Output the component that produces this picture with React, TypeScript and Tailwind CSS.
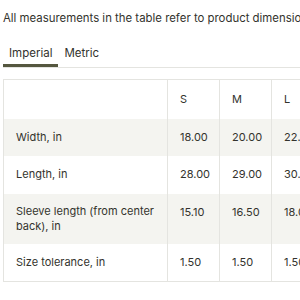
import { useState } from "react";

type Row = { label: string; values: string[]; shaded?: boolean };

const sizes = ["S", "M", "L"];

const rows: Row[] = [
  { label: "Width, in", values: ["18.00", "20.00", "22.00"], shaded: true },
  { label: "Length, in", values: ["28.00", "29.00", "30.00"] },
  { label: "Sleeve length (from center back), in", values: ["15.10", "16.50", "18.00"], shaded: true },
  { label: "Size tolerance, in", values: ["1.50", "1.50", "1.50"] },
];

const App = () => {
  const [tab, setTab] = useState("Imperial");

  return (
    <div className="w-[300px] h-[300px] overflow-hidden bg-white text-[#33332d] font-['Inter',sans-serif]">
      <div className="w-[340px] pl-[3px]">
        <p className="pt-[10px] text-[11.4px] leading-[16px] whitespace-nowrap">
          All measurements in the table refer to product dimensions.
        </p>

        <div className="mt-[19px] flex border-b border-[#e4e4e0]">
          {["Imperial", "Metric"].map((t) => (
            <button
              key={t}
              onClick={() => setTab(t)}
              className={
                "px-[6px] pb-[3px] text-[11.5px] leading-[16px] border-b-[3px] " +
                (tab === t ? "border-[#55573f]" : "border-transparent")
              }
            >
              {t}
            </button>
          ))}
        </div>

        <table className="mt-[11px] w-[320px] table-fixed border-collapse border border-[#e4e4e0] text-[11px] leading-[15px]">
          <colgroup>
            <col className="w-[164px]" />
            <col className="w-[52px]" />
            <col className="w-[52px]" />
            <col className="w-[52px]" />
          </colgroup>
          <thead>
            <tr className="h-[39px]">
              <th className="border-r border-[#e4e4e0]"></th>
              {sizes.map((s) => (
                <th key={s} className="px-3 text-left font-normal border-r border-[#e4e4e0]">
                  {s}
                </th>
              ))}
            </tr>
          </thead>
          <tbody>
            {rows.map((row) => (
              <tr key={row.label} className={row.shaded ? "h-[37px] bg-[#f4f4f0]" : "h-[38px]"}>
                <td className="px-3 py-[10px] border-r border-[#e4e4e0]">{row.label}</td>
                {row.values.map((v, i) => (
                  <td key={i} className="px-3 align-top pt-[11px] border-r border-[#e4e4e0] whitespace-nowrap">
                    {v}
                  </td>
                ))}
              </tr>
            ))}
          </tbody>
        </table>
      </div>
    </div>
  );
};

export default App;
